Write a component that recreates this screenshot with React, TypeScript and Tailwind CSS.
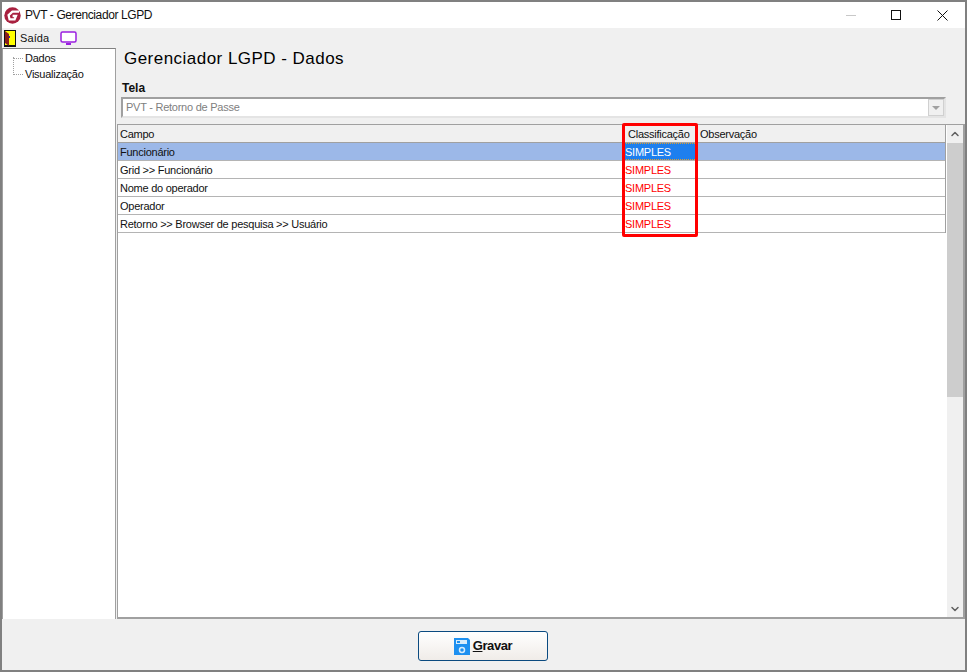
import React from "react";
import { ChevronDown, ChevronUp } from "lucide-react";

const rows = [
  "Funcionário",
  "Grid >> Funcionário",
  "Nome do operador",
  "Operador",
  "Retorno >> Browser de pesquisa >> Usuário",
];

function Logo() {
  return (
    <svg width="17" height="17" viewBox="0 0 17 17" className="shrink-0">
      <circle cx="8.5" cy="8.5" r="8.2" fill="#a8203f" />
      <path d="M15 4.6H8.4L4.6 8.2 5.6 12.4H10.6L12 9H8.6" fill="none" stroke="#fff" strokeWidth="2.3" />
    </svg>
  );
}

function DoorIcon() {
  return (
    <svg width="12" height="17" viewBox="0 0 12 17" className="shrink-0">
      <rect width="12" height="17" fill="#111" />
      <rect x="1" y="1" width="10" height="14" fill="#ffff00" />
      <path d="M1 1L5 4V16L1 13Z" fill="#8a1c1c" />
      <rect x="5" y="6" width="1" height="2" fill="#2030c0" />
    </svg>
  );
}

function MonitorIcon() {
  return (
    <svg width="17" height="15" viewBox="0 0 17 15" className="shrink-0">
      <rect x="1" y="1" width="15" height="10" rx="1.5" fill="#fff" stroke="#9a1fe0" strokeWidth="1.5" />
      <rect x="6" y="12" width="5" height="2" fill="#9a1fe0" />
    </svg>
  );
}

function SaveIcon() {
  return (
    <svg width="16" height="17" viewBox="0 0 16 17" className="shrink-0">
      <path d="M0 0H14L16 2V17H0Z" fill="#1e90f0" />
      <rect x="2" y="2" width="11" height="4" fill="#d8ecfb" />
      <rect x="3" y="3" width="3" height="2" fill="#1e90f0" />
      <circle cx="8" cy="12" r="2.5" fill="none" stroke="#d8ecfb" strokeWidth="1.5" />
    </svg>
  );
}

export default function App() {
  return (
    <div className="w-[967px] h-[672px] overflow-hidden bg-white flex flex-col border-2 border-[#808080] font-['Liberation_Sans',sans-serif] text-[11px] tracking-[-0.25px] text-[#111]">
      <div className="h-[26px] shrink-0 bg-white flex items-center pl-[2px]">
        <Logo />
        <span className="ml-[4px] text-[12px] tracking-[-0.4px]">PVT - Gerenciador LGPD</span>
        <div className="ml-auto flex items-center">
          <div className="w-[10px] h-px bg-[#c8c8c8] mr-[35px]" />
          <div className="w-[10px] h-[10px] border border-[#111] mr-[36px]" />
          <svg width="11" height="11" viewBox="0 0 11 11" className="mr-[17px]">
            <path d="M0.5 0.5L10.5 10.5M10.5 0.5L0.5 10.5" stroke="#111" strokeWidth="1" />
          </svg>
        </div>
      </div>

      <div className="h-[20px] shrink-0 bg-[#f0f0f0] flex items-center pl-[2px]">
        <DoorIcon />
        <span className="ml-[4px] text-[11px] tracking-[0.1px]">Saída</span>
        <div className="ml-[11px]">
          <MonitorIcon />
        </div>
      </div>

      <div className="flex-1 min-h-0 bg-[#f0f0f0] flex">
        <div className="w-[114px] shrink-0 bg-white border-t border-l border-r border-[#a0a0a0] border-t-[#808080] relative">
          <div className="absolute left-[10px] top-[8px] w-px h-[16px] border-l border-dotted border-[#a0a0a0]" />
          <div className="pl-[22px] pt-px flex flex-col">
            <div className="h-[16px] leading-[16px] relative">
              <span className="absolute left-[-12px] top-[8px] w-[10px] border-t border-dotted border-[#a0a0a0]" />
              Dados
            </div>
            <div className="h-[16px] leading-[16px] relative">
              <span className="absolute left-[-12px] top-[8px] w-[10px] border-t border-dotted border-[#a0a0a0]" />
              Visualização
            </div>
          </div>
        </div>

        <div className="flex-1 min-w-0 flex flex-col pl-px">
          <div className="h-[76px] shrink-0 pl-[4px]">
            <div className="text-[17px] leading-[20px] tracking-[0.47px] text-black h-[31px] pt-px pl-[3px]">Gerenciador LGPD - Dados</div>
            <div className="font-bold text-[12px] leading-[14px] tracking-[0px] pt-[2px] h-[18px] pl-px">Tela</div>
            <div className="w-[825px] h-[21px] border-2 border-[#a0a0a0] border-r-[#e4e4e4] border-b-[#e4e4e4] bg-white flex items-center pl-[3px] text-[#808080]">
              PVT - Retorno de Passe
              <div className="ml-auto w-[16px] h-[17px] bg-[#f0f0f0] border border-[#d0d0d0] flex items-center justify-center">
                <div className="w-0 h-0 border-x-[4px] border-x-transparent border-t-[4px] border-t-[#a0a0a0]" />
              </div>
            </div>
          </div>

          <div className="flex-1 min-h-0 w-[848px] bg-white border border-r-2 border-b-2 border-[#a0a0a0] flex relative">
            <div className="w-[828px] shrink-0 self-start border-r border-[#a0a0a0]">
              <div className="h-[18px] bg-[#f0f0f0] flex items-center border-b border-[#a0a0a0] pt-px">
                <div className="w-[504px] pl-[2px]">Campo</div>
                <div className="w-[75px] pl-[6px]">Classificação</div>
                <div className="flex-1 pl-[3px]">Observação</div>
              </div>
              {rows.map((row, i) => (
                <div
                  key={row}
                  className={`h-[18px] flex items-center border-b border-[#b4b4b4] ${i === 0 ? "bg-[#9cb8e8]" : "bg-white"}`}
                >
                  <div className="w-[504px] pl-[2px] pt-px">{row}</div>
                  <div
                    className={
                      i === 0
                        ? "w-[75px] h-full pl-[3px] bg-[#1e7fee] text-white border-y border-dotted border-[#e0a030] leading-[17px]"
                        : "w-[75px] h-full pl-[3px] text-[#ff0000] leading-[19px]"
                    }
                  >
                    SIMPLES
                  </div>
                  <div className="flex-1" />
                </div>
              ))}
            </div>

            <div className="ml-auto w-[16px] bg-[#f0f0f0] flex flex-col items-center">
              <div className="h-[18px] w-full flex items-center justify-center">
                <ChevronUp size={12} strokeWidth={3} className="text-[#606060]" />
              </div>
              <div className="h-[254px] w-full bg-[#cdcdcd]" />
              <div className="mt-auto h-[17px] w-full flex items-center justify-center">
                <ChevronDown size={12} strokeWidth={3} className="text-[#606060]" />
              </div>
            </div>

            {/* red highlight drawn over the column */}
            <div className="absolute left-[504px] top-[-2px] w-[76px] h-[114px] border-[3px] border-[#ff0000] rounded-[2px]" />
          </div>
        </div>
      </div>

      <div className="h-[51px] shrink-0 bg-[#f0f0f0] flex items-start justify-center pt-[12px] pr-px">
        <button
          type="button"
          className="w-[130px] h-[30px] rounded-[3px] border border-[#0a4a80] bg-gradient-to-b from-white to-[#f0ece8] flex items-center justify-center gap-[3px] font-bold text-[13px] tracking-[-0.4px] text-[#111]"
        >
          <SaveIcon />
          <span>
            <span className="underline">G</span>ravar
          </span>
        </button>
      </div>
    </div>
  );
}
